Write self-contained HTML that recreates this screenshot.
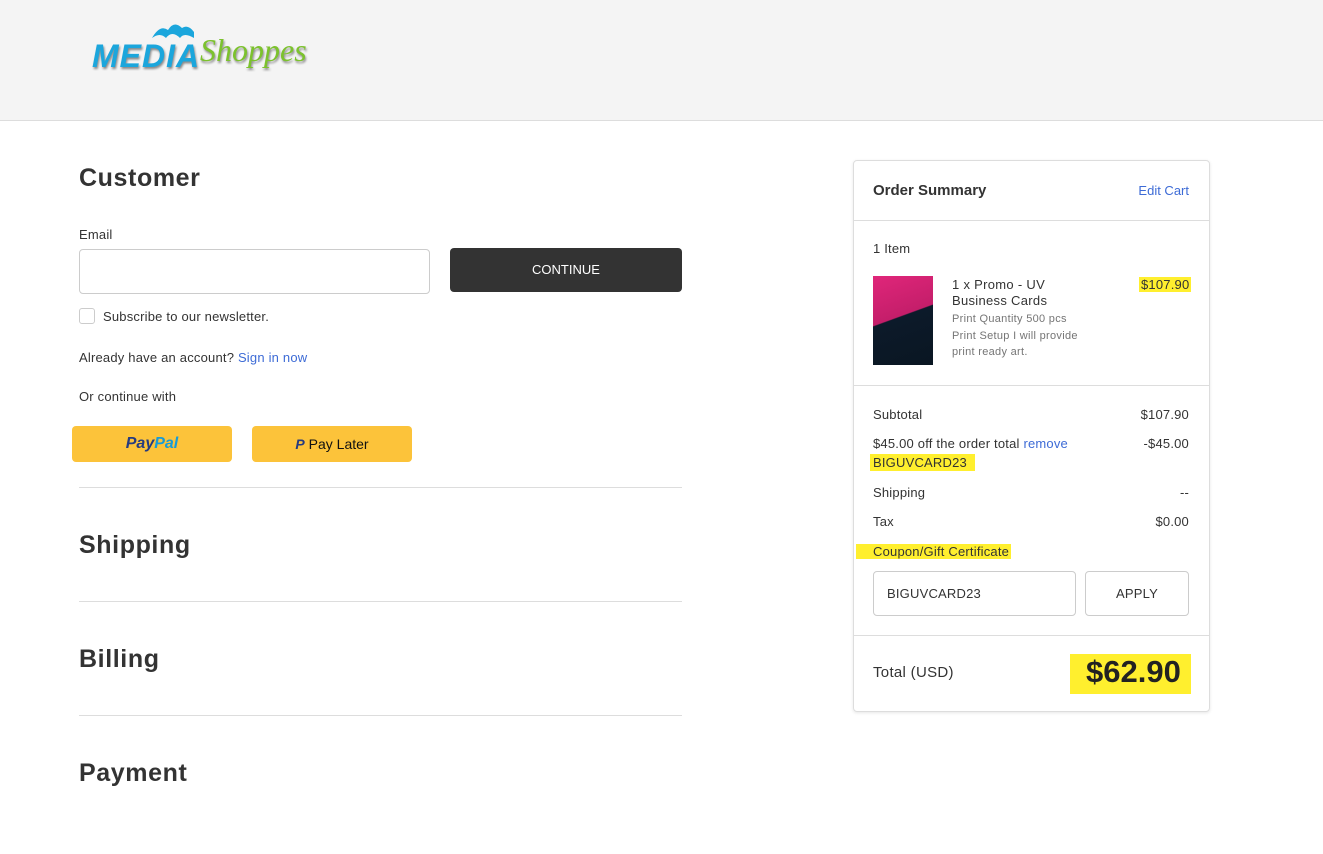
<!DOCTYPE html>
<html><head><meta charset="utf-8"><style>
*{box-sizing:border-box;margin:0;padding:0}
body{width:1323px;height:854px;background:#fff;font-family:"Liberation Sans",sans-serif;color:#333;position:relative;overflow:hidden}
.hdr{position:absolute;left:0;top:0;width:1323px;height:121px;background:#f4f4f4;border-bottom:1px solid #ddd}
.a{position:absolute}
h2{position:absolute;font-size:25px;font-weight:bold;color:#333;letter-spacing:0.6px}
.hl{background:#ffef2e}
.line{position:absolute;left:79px;width:603px;height:1px;background:#ddd}
.s{font-size:13px;color:#333;letter-spacing:0.2px}
</style></head><body>
<div class="hdr">
<svg class="a" style="left:150px;top:20px" width="45" height="22"><path d="M2 18 Q10 4 18 10 Q24 0 32 8 Q38 4 44 12 L44 18 Q34 12 30 18 Q22 10 16 18 Q10 12 2 18Z" fill="#1ba6dc"/></svg>
<div class="a" style="left:92px;top:38px;font-size:32px;font-weight:900;color:#1ba6dc;letter-spacing:1px;font-style:italic;text-shadow:1px 2px 2px #888">MEDIA</div>
<div class="a" style="left:200px;top:32px;font-size:32px;font-style:italic;color:#7cc22d;font-family:'Liberation Serif',serif;text-shadow:1px 2px 2px #888">Shoppes</div>
</div>
<h2 style="left:79px;top:164px">Customer</h2>
<div class="a s" style="left:79px;top:227px">Email</div>
<div class="a" style="left:79px;top:249px;width:351px;height:45px;border:1px solid #ccc;border-radius:4px"></div>
<div class="a" style="left:450px;top:248px;width:232px;height:44px;background:#333;border-radius:4px;color:#fff;font-size:13px;text-align:center;line-height:44px">CONTINUE</div>
<div class="a" style="left:79px;top:308px;width:16px;height:16px;border:1px solid #ccc;border-radius:3px"></div>
<div class="a s" style="left:103px;top:309px">Subscribe to our newsletter.</div>
<div class="a s" style="left:79px;top:350px">Already have an account? <span style="color:#3d6bd6">Sign in now</span></div>
<div class="a s" style="left:79px;top:389px">Or continue with</div>
<div class="a" style="left:72px;top:426px;width:160px;height:36px;background:#fcc33a;border-radius:4px;text-align:center;line-height:36px;font-weight:bold;font-style:italic;font-size:16px;color:#253b80">Pay<span style="color:#179bd7">Pal</span></div>
<div class="a" style="left:252px;top:426px;width:160px;height:36px;background:#fcc33a;border-radius:4px;text-align:center;line-height:36px;font-size:14px;color:#111"><b style="color:#253b80;font-style:italic">P</b> Pay Later</div>
<div class="line" style="top:487px"></div>
<h2 style="left:79px;top:531px">Shipping</h2>
<div class="line" style="top:601px"></div>
<h2 style="left:79px;top:645px">Billing</h2>
<div class="line" style="top:715px"></div>
<h2 style="left:79px;top:759px">Payment</h2>

<div class="a" style="left:853px;top:160px;width:357px;height:552px;border:1px solid #ddd;border-radius:4px;box-shadow:0 1px 3px rgba(0,0,0,.1)"></div>
<div class="a" style="left:873px;top:182px;font-size:15px;font-weight:bold">Order Summary</div>
<div class="a" style="right:134px;top:183px;font-size:13px;color:#3d6bd6">Edit Cart</div>
<div class="a" style="left:854px;top:220px;width:355px;height:1px;background:#ddd"></div>
<div class="a s" style="left:873px;top:241px">1 Item</div>
<div class="a" style="left:873px;top:276px;width:60px;height:89px;background:linear-gradient(160deg,#e0267a 0,#c41e6a 45%,#0c1a2a 46%,#0a1622)"></div>
<div class="a" style="left:952px;top:277px;font-size:13px;line-height:16px;letter-spacing:0.3px">1 x Promo - UV<br>Business Cards</div>
<div class="a" style="left:952px;top:311px;font-size:11px;line-height:16.5px;color:#757575;letter-spacing:0.3px">Print Quantity 500 pcs<br>Print Setup I will provide<br>print ready art.</div>
<div class="a s hl" style="left:1139px;top:277px;padding:0 2px">$107.90</div>
<div class="a" style="left:854px;top:385px;width:355px;height:1px;background:#ddd"></div>
<div class="a s" style="left:873px;top:407px">Subtotal</div><div class="a s" style="right:134px;top:407px">$107.90</div>
<div class="a s" style="left:873px;top:436px">$45.00 off the order total <span style="color:#3d6bd6">remove</span></div><div class="a s" style="right:134px;top:436px">-$45.00</div>
<div class="a s hl" style="left:870px;top:454px;padding:1px 8px 1px 3px">BIGUVCARD23</div>
<div class="a s" style="left:873px;top:485px">Shipping</div><div class="a s" style="right:134px;top:485px">--</div>
<div class="a s" style="left:873px;top:514px">Tax</div><div class="a s" style="right:134px;top:514px">$0.00</div>
<div class="a s hl" style="left:856px;top:544px;padding:0 2px 0 17px">Coupon/Gift Certificate</div>
<div class="a s" style="left:873px;top:571px;width:203px;height:45px;border:1px solid #ccc;border-radius:4px;padding:14px 13px">BIGUVCARD23</div>
<div class="a s" style="left:1085px;top:571px;width:104px;height:45px;border:1px solid #ccc;border-radius:4px;text-align:center;line-height:43px">APPLY</div>
<div class="a" style="left:854px;top:635px;width:355px;height:1px;background:#ddd"></div>
<div class="a" style="left:873px;top:664px;font-size:15px;letter-spacing:0.3px">Total (USD)</div>
<div class="a hl" style="left:1070px;top:654px;padding:0 10px 4px 16px;font-size:31px;font-weight:bold;color:#222">$62.90</div>
</body></html>
